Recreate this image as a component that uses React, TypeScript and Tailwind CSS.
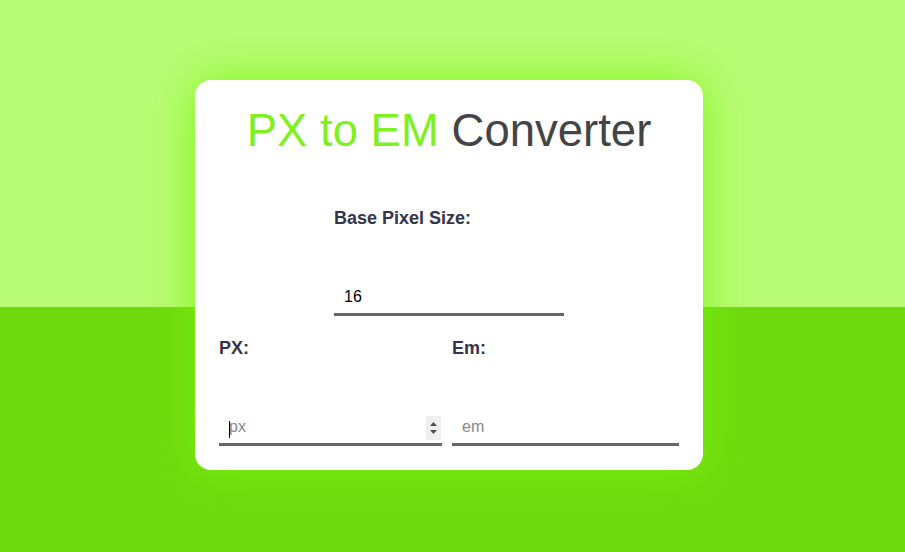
import React from 'react';

const font = { fontFamily: '"Liberation Sans", Arial, sans-serif' };

export default function App() {
  return (
    <div
      className="w-full h-[552px] bg-[linear-gradient(to_bottom,#b9fc76_307px,#6fd90f_307px)] flex pl-[195px] pt-[80px]"
      style={font}
    >
      <div className="w-[508px] h-[390px] bg-white rounded-[16px] shadow-[0_0_45px_rgba(120,245,10,0.9)] px-[24px] pt-[25px] pb-[24px] flex flex-col">
        <h1 className="text-[45.5px] leading-[52px] text-center text-[#444]">
          <span className="text-[#7ff021]">PX to EM</span> Converter
        </h1>

        <div className="w-[230px] mx-auto mt-[51px] flex flex-col">
          <label className="text-[18px] leading-[21px] font-bold text-[#34344a]">Base Pixel Size:</label>
          <input
            type="text"
            defaultValue="16"
            className="mt-[50px] h-[37px] pt-[9px] pb-[7px] px-[10px] text-[16px] text-black outline-none border-b-[3px] border-[#666]"
          />
        </div>

        <div className="flex gap-[10px] mt-[22px]">
          <div className="w-[223px] flex flex-col">
            <label className="text-[18px] leading-[21px] font-bold text-[#34344a]">PX:</label>
            <div className="relative mt-[50px]">
              <input
                type="text"
                placeholder="px"
                className="w-full h-[37px] pt-[9px] pb-[7px] px-[10px] text-[16px] outline-none border-b-[3px] border-[#666] placeholder:text-[#888]"
              />
              <span className="absolute left-[10px] top-[12px] w-px h-[17px] bg-black" />
              <div className="absolute right-[1px] top-[7px] w-[15px] h-[24px] bg-[#efefef] flex flex-col items-center justify-center gap-[4px]">
                <svg width="7" height="4" viewBox="0 0 7 4"><path d="M3.5 0L7 4H0z" fill="#505050" /></svg>
                <svg width="7" height="4" viewBox="0 0 7 4"><path d="M0 0h7L3.5 4z" fill="#505050" /></svg>
              </div>
            </div>
          </div>
          <div className="flex-1 flex flex-col">
            <label className="text-[18px] leading-[21px] font-bold text-[#34344a]">Em:</label>
            <input
              type="text"
              placeholder="em"
              className="mt-[50px] w-full h-[37px] pt-[9px] pb-[7px] px-[10px] text-[16px] outline-none border-b-[3px] border-[#666] placeholder:text-[#888]"
            />
          </div>
        </div>
      </div>
    </div>
  );
}
